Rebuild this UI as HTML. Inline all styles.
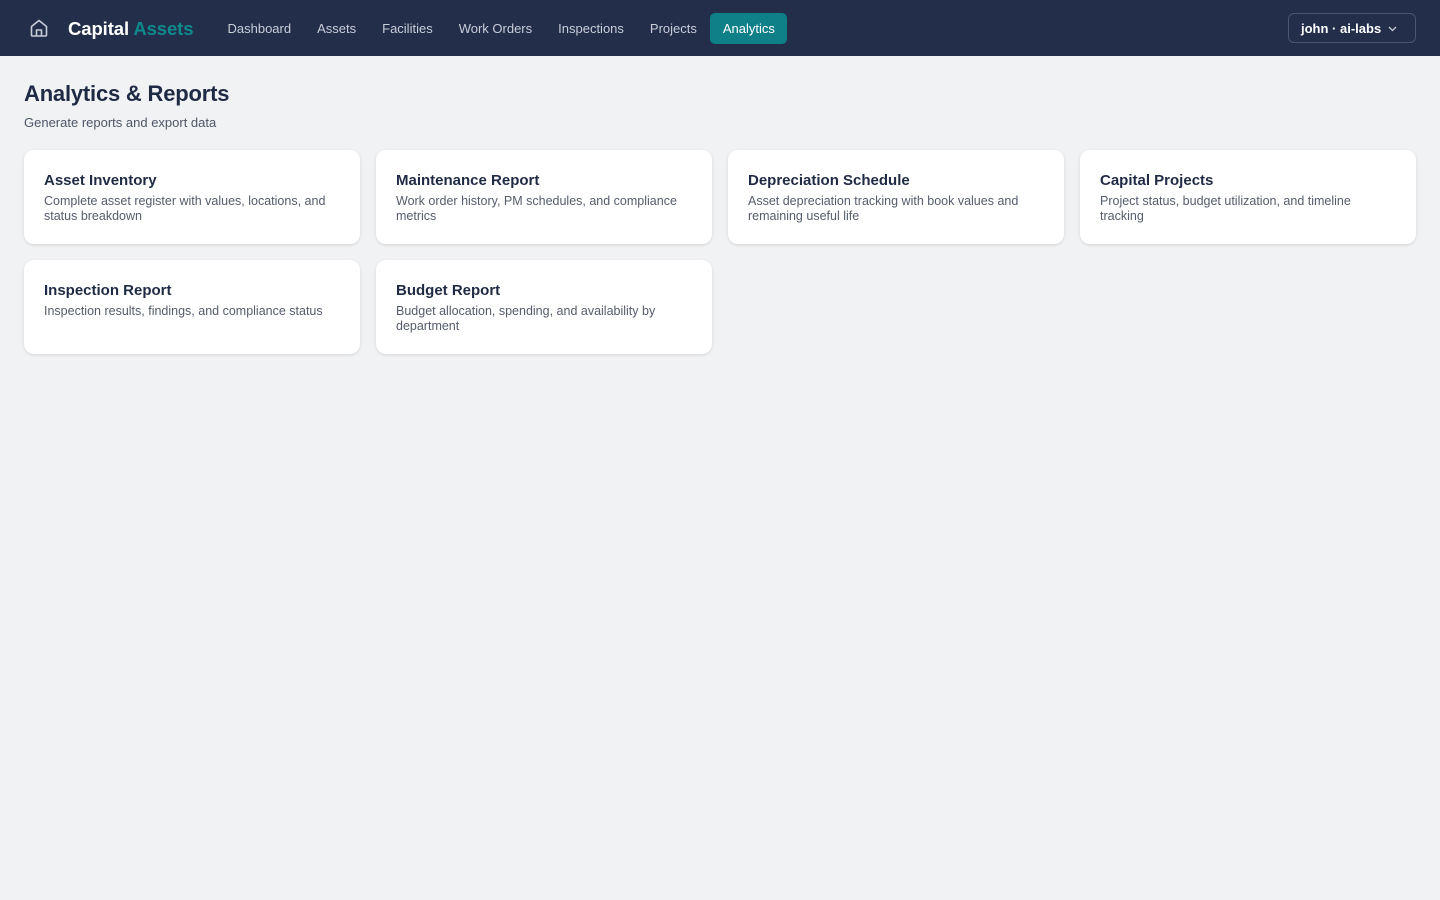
<!DOCTYPE html>
<html><head><meta charset="utf-8"><style>
*{box-sizing:border-box;margin:0;padding:0}
body{width:1440px;height:900px;background:#f1f2f4;font-family:"Liberation Sans",sans-serif;color:#1f2a44;overflow:hidden}
.nav{height:56px;background:#232e4b;position:relative}
.home{position:absolute;left:29px;top:18px}
.brand{position:absolute;left:68px;top:18px;font-size:18.5px;font-weight:bold;color:#fff;letter-spacing:-0.1px}
.brand span{color:#0f8a8c}
.links{position:absolute;left:215px;top:13px;display:flex}
.links a{display:block;height:31px;line-height:31px;padding:0 12.5px;margin-right:1px;font-size:13px;color:#c8cdd8;text-decoration:none;border-radius:5px}
.links a.act{background:#0f8088;color:#fff}
.user{position:absolute;left:1288px;top:13px;width:128px;height:30px;border:1px solid #4b5570;border-radius:6px;color:#fff;font-size:13px;font-weight:bold;line-height:29px;padding-left:12px}
.user svg{position:absolute;right:18px;top:12px}
h1{position:absolute;left:24px;top:81px;font-size:22px;font-weight:bold;letter-spacing:-0.2px}
.sub{position:absolute;left:24px;top:115px;font-size:13px;color:#4e5566}
.card{position:absolute;width:336px;height:94px;background:#fff;border-radius:10px;box-shadow:0 1px 3px rgba(0,0,0,.12);padding:20px 20px}
.card h3{font-size:15px;font-weight:bold;margin-bottom:5px;margin-top:2px}
.card p{font-size:12.5px;line-height:15px;color:#555c6b}
</style></head><body>
<div class="nav">
<svg class="home" width="20" height="20" viewBox="0 0 20 20" fill="none" stroke="#c8cdd8" stroke-width="1.6" stroke-linejoin="round"><path d="M2.5 8.5L10 2.5l7.5 6V17a1 1 0 0 1-1 1h-13a1 1 0 0 1-1-1z"/><path d="M7.5 18v-6h5v6"/></svg>
<div class="brand">Capital <span>Assets</span></div>
<div class="links"><a>Dashboard</a><a>Assets</a><a>Facilities</a><a>Work Orders</a><a>Inspections</a><a>Projects</a><a class="act">Analytics</a></div>
<div class="user">john · ai-labs<svg width="9" height="6" viewBox="0 0 9 6" fill="none" stroke="#c8cdd8" stroke-width="1.3"><path d="M1 1l3.5 3.5L8 1"/></svg></div>
</div>
<h1>Analytics &amp; Reports</h1>
<div class="sub">Generate reports and export data</div>
<div class="card" style="left:24px;top:150px"><h3>Asset Inventory</h3><p>Complete asset register with values, locations, and status breakdown</p></div>
<div class="card" style="left:376px;top:150px"><h3>Maintenance Report</h3><p>Work order history, PM schedules, and compliance metrics</p></div>
<div class="card" style="left:728px;top:150px"><h3>Depreciation Schedule</h3><p>Asset depreciation tracking with book values and remaining useful life</p></div>
<div class="card" style="left:1080px;top:150px"><h3>Capital Projects</h3><p>Project status, budget utilization, and timeline<br>tracking</p></div>
<div class="card" style="left:24px;top:260px"><h3>Inspection Report</h3><p>Inspection results, findings, and compliance status</p></div>
<div class="card" style="left:376px;top:260px"><h3>Budget Report</h3><p>Budget allocation, spending, and availability by department</p></div>
</body></html>
